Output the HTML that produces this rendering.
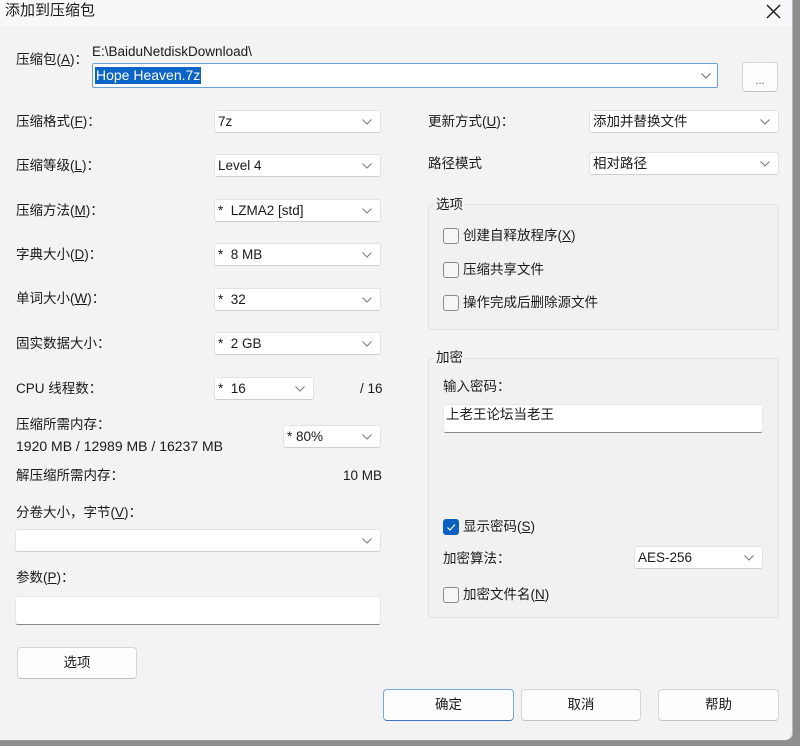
<!DOCTYPE html>
<html><head><meta charset="utf-8"><style>
*{box-sizing:border-box;margin:0;padding:0}
body{width:800px;height:746px;background:#8f8f8f;position:relative;overflow:hidden;font-family:"Liberation Sans","Noto Sans CJK SC",sans-serif;font-size:13.5px;color:#1a1a1a;line-height:16px}
#dlg{position:absolute;left:0;top:0;width:793px;height:741px;background:#f3f3f3;border-right:1px solid #bbb;border-bottom:1px solid #999;border-radius:0 0 8px 0}
#title{position:absolute;left:0;top:0;width:792px;height:26px;background:#f6f8fa}
.a{position:absolute;white-space:nowrap}
.cb{position:absolute;background:#fff;border:1px solid #e3e3e3;border-bottom-color:#cfcfcf;border-radius:3px;height:23px}
.cb span{position:absolute;left:3px;top:3px}
.cb svg{position:absolute;right:8px;top:8px}
.in{position:absolute;background:#fff;border:1px solid #e8e8e8;border-bottom:1px solid #888;border-radius:3px}
.btn{position:absolute;background:#fdfdfd;border:1px solid #d5d5d5;border-bottom-color:#c0c0c0;border-radius:4px;text-align:center}
.grp{position:absolute;border:1px solid #e2e2e2;border-radius:3px;background:#f1f1f1}
.chk{position:absolute;width:16px;height:16px;border:1px solid #8a8a8a;border-radius:3px;background:#f6f6f6}
u{text-decoration:underline}
</style></head><body>
<div id="dlg">
<div id="title"></div>
<div class="a" style="left:5px;top:3px;font-size:15px">添加到压缩包</div>
<svg class="a" style="left:766px;top:4px" width="15" height="15"><path d="M1 1L14 14M14 1L1 14" stroke="#222" stroke-width="1.5"/></svg>

<div class="a" style="left:16px;top:52px">压缩包(<u>A</u>)：</div>
<div class="a" style="left:92px;top:44px;font-size:13.5px">E:\BaiduNetdiskDownload\</div>
<div class="in" style="left:92px;top:63px;width:626px;height:25px;border:1px solid #6aa0d8;border-radius:2px"></div>
<div class="a" style="left:95px;top:67px;background:#0b64c6;color:#fff;padding:0 1px;line-height:17px;font-size:14px">Hope Heaven.7z</div>
<svg class="a" style="left:701px;top:73px" width="10" height="6"><path d="M0.5 0.5L5 5L9.5 0.5" stroke="#666" fill="none"/></svg>
<div class="btn" style="left:742px;top:62px;width:36px;height:30px;font-size:11px;color:#555;padding-top:10px">...</div>

<div class="a" style="left:16px;top:114px">压缩格式(<u>F</u>)：</div>
<div class="cb" style="left:214px;top:110px;width:167px"><span>7z</span><svg width="10" height="6"><path d="M0.5 0.5L5 5L9.5 0.5" stroke="#777" fill="none"/></svg></div>
<div class="a" style="left:16px;top:158px">压缩等级(<u>L</u>)：</div>
<div class="cb" style="left:214px;top:154px;width:167px"><span>Level 4</span><svg width="10" height="6"><path d="M0.5 0.5L5 5L9.5 0.5" stroke="#777" fill="none"/></svg></div>
<div class="a" style="left:16px;top:203px">压缩方法(<u>M</u>)：</div>
<div class="cb" style="left:214px;top:199px;width:167px"><span>*&nbsp; LZMA2 [std]</span><svg width="10" height="6"><path d="M0.5 0.5L5 5L9.5 0.5" stroke="#777" fill="none"/></svg></div>
<div class="a" style="left:16px;top:247px">字典大小(<u>D</u>)：</div>
<div class="cb" style="left:214px;top:243px;width:167px"><span>*&nbsp; 8 MB</span><svg width="10" height="6"><path d="M0.5 0.5L5 5L9.5 0.5" stroke="#777" fill="none"/></svg></div>
<div class="a" style="left:16px;top:291px">单词大小(<u>W</u>)：</div>
<div class="cb" style="left:214px;top:288px;width:167px"><span>*&nbsp; 32</span><svg width="10" height="6"><path d="M0.5 0.5L5 5L9.5 0.5" stroke="#777" fill="none"/></svg></div>
<div class="a" style="left:16px;top:336px">固实数据大小：</div>
<div class="cb" style="left:214px;top:332px;width:167px"><span>*&nbsp; 2 GB</span><svg width="10" height="6"><path d="M0.5 0.5L5 5L9.5 0.5" stroke="#777" fill="none"/></svg></div>
<div class="a" style="left:16px;top:381px">CPU 线程数：</div>
<div class="cb" style="left:214px;top:377px;width:100px"><span>*&nbsp; 16</span><svg width="10" height="6"><path d="M0.5 0.5L5 5L9.5 0.5" stroke="#777" fill="none"/></svg></div>
<div class="a" style="left:360px;top:381px">/ 16</div>
<div class="a" style="left:16px;top:417px">压缩所需内存：</div>
<div class="a" style="left:16px;top:438px;font-size:14px">1920 MB / 12989 MB / 16237 MB</div>
<div class="cb" style="left:283px;top:425px;width:98px"><span>* 80%</span><svg width="10" height="6"><path d="M0.5 0.5L5 5L9.5 0.5" stroke="#777" fill="none"/></svg></div>
<div class="a" style="left:16px;top:468px">解压缩所需内存：</div>
<div class="a" style="left:343px;top:468px">10 MB</div>
<div class="a" style="left:16px;top:505px">分卷大小，字节(<u>V</u>)：</div>
<div class="cb" style="left:15px;top:529px;width:366px"><span></span><svg width="10" height="6"><path d="M0.5 0.5L5 5L9.5 0.5" stroke="#777" fill="none"/></svg></div>
<div class="a" style="left:16px;top:570px">参数(<u>P</u>)：</div>
<div class="in" style="left:15px;top:596px;width:366px;height:29px"></div>
<div class="btn" style="left:17px;top:647px;width:120px;height:32px;padding-top:7px">选项</div>

<div class="a" style="left:428px;top:114px">更新方式(<u>U</u>)：</div>
<div class="cb" style="left:589px;top:110px;width:190px"><span>添加并替换文件</span><svg width="10" height="6"><path d="M0.5 0.5L5 5L9.5 0.5" stroke="#777" fill="none"/></svg></div>
<div class="a" style="left:428px;top:156px">路径模式</div>
<div class="cb" style="left:589px;top:152px;width:190px"><span>相对路径</span><svg width="10" height="6"><path d="M0.5 0.5L5 5L9.5 0.5" stroke="#777" fill="none"/></svg></div>

<div class="grp" style="left:428px;top:204px;width:351px;height:126px"></div>
<div class="a" style="left:434px;top:197px;background:#f3f3f3;padding:0 2px">选项</div>
<div class="chk" style="left:443px;top:228px"></div><div class="a" style="left:463px;top:228px">创建自释放程序(<u>X</u>)</div>
<div class="chk" style="left:443px;top:262px"></div><div class="a" style="left:463px;top:262px">压缩共享文件</div>
<div class="chk" style="left:443px;top:295px"></div><div class="a" style="left:463px;top:295px">操作完成后删除源文件</div>

<div class="grp" style="left:428px;top:358px;width:351px;height:260px"></div>
<div class="a" style="left:434px;top:350px;background:#f3f3f3;padding:0 2px">加密</div>
<div class="a" style="left:443px;top:379px">输入密码：</div>
<div class="in" style="left:443px;top:404px;width:320px;height:29px"></div>
<div class="a" style="left:446px;top:407px">上老王论坛当老王</div>
<div class="chk" style="left:443px;top:519px;background:#0b5fc0;border-color:#0b5fc0"><svg width="14" height="14" style="position:absolute;left:0;top:0"><path d="M3.5 7.5L6 10L11 4.5" stroke="#fff" stroke-width="1.2" fill="none"/></svg></div>
<div class="a" style="left:463px;top:519px">显示密码(<u>S</u>)</div>
<div class="a" style="left:443px;top:551px">加密算法：</div>
<div class="cb" style="left:634px;top:546px;width:129px"><span>AES-256</span><svg width="10" height="6"><path d="M0.5 0.5L5 5L9.5 0.5" stroke="#777" fill="none"/></svg></div>
<div class="chk" style="left:443px;top:587px"></div><div class="a" style="left:463px;top:587px">加密文件名(<u>N</u>)</div>

<div class="btn" style="left:383px;top:689px;width:131px;height:32px;padding-top:7px;border-color:#7aa7d6;border-bottom-color:#3d78c0">确定</div>
<div class="btn" style="left:521px;top:689px;width:120px;height:32px;padding-top:7px">取消</div>
<div class="btn" style="left:658px;top:689px;width:121px;height:32px;padding-top:7px">帮助</div>
</div>
</body></html>
